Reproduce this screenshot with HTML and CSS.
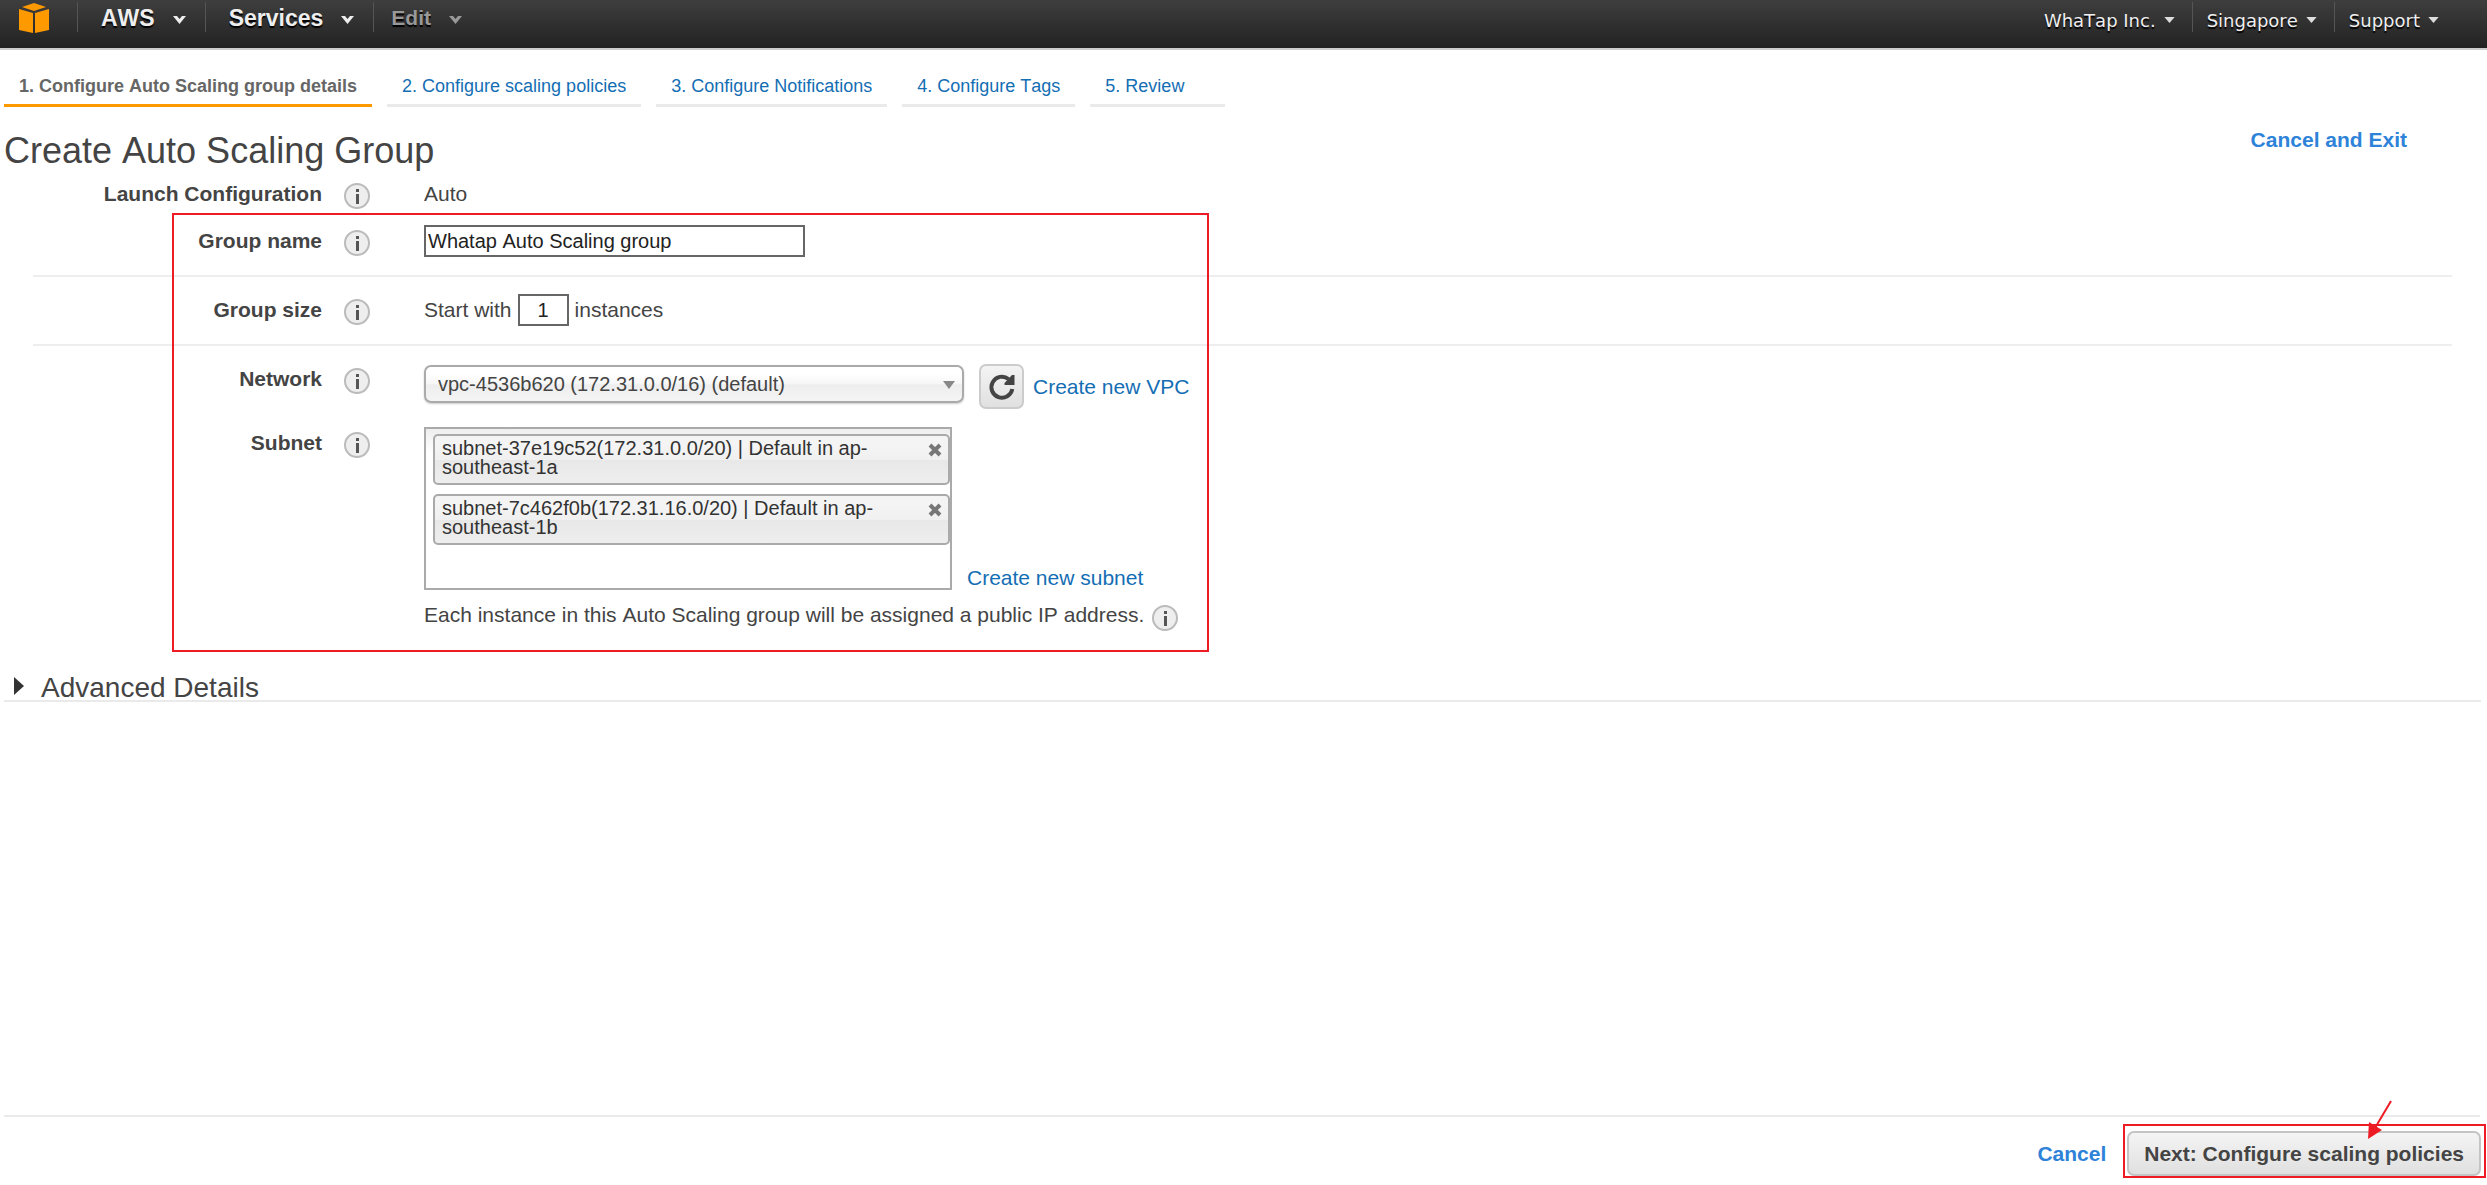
FILE: index.html
```html
<!DOCTYPE html>
<html lang="en">
<head>
    <meta charset="UTF-8">
    <meta name="viewport" content="width=device-width, initial-scale=1.0">
    <title>Create Auto Scaling Group</title>

    <link rel="stylesheet" href="styles.css">

</head>
<body>
    <header class="topbar">
        <a class="logo" href="#" aria-label="Home">
            <svg viewBox="0 0 32 32" width="32" height="32">
                <path fill="#ff9900" d="M4 5 L16 1 L28 5 L16 9 Z"/>
                <path fill="#ff9900" d="M1 7 L15 11 V31 L1 28 Z"/>
                <path fill="#ff9900" d="M31 7 L17 11 V31 L31 28 Z"/>
            </svg>
        </a>
        <button class="menu" type="button">AWS <svg class="caret" viewBox="0 0 13 8"><path d="M0 0 L4 0 L6.500 3 L9 0 L13 0 L6.500 8 Z"/></svg></button>
        <button class="menu" type="button">Services <svg class="caret" viewBox="0 0 13 8"><path d="M0 0 L4 0 L6.500 3 L9 0 L13 0 L6.500 8 Z"/></svg></button>
        <button class="menu menu-edit" type="button">Edit <svg class="caret" viewBox="0 0 13 8"><path d="M0 0 L4 0 L6.500 3 L9 0 L13 0 L6.500 8 Z"/></svg></button>

        <div class="account">
            <button class="submenu" type="button">WhaTap Inc. <svg class="caret-small" viewBox="0 0 12 7"><path d="M0 0 L12 0 L6 7 Z"/></svg></button>
            <button class="submenu" type="button">Singapore <svg class="caret-small" viewBox="0 0 12 7"><path d="M0 0 L12 0 L6 7 Z"/></svg></button>
            <button class="submenu" type="button">Support <svg class="caret-small" viewBox="0 0 12 7"><path d="M0 0 L12 0 L6 7 Z"/></svg></button>
        </div>
    </header>

    <nav class="steps">
        <a class="step active" href="#">1. Configure Auto Scaling group details</a>
        <a class="step" href="#">2. Configure scaling policies</a>
        <a class="step" href="#">3. Configure Notifications</a>
        <a class="step" href="#">4. Configure Tags</a>
        <a class="step" href="#">5. Review</a>
    </nav>

    <main>
        <div class="heading">
            <h1>Create Auto Scaling Group</h1>
            <a class="action" href="#">Cancel and Exit</a>
        </div>

        <form class="form">
            <div class="row">
                <span class="label">Launch Configuration</span>
                <svg class="info" viewBox="0 0 26 26"><use href="#info"/></svg>
                <div class="value">Auto</div>
            </div>
            <div class="row row-line">
                <label class="label" for="name">Group name</label>
                <svg class="info" viewBox="0 0 26 26"><use href="#info"/></svg>
                <div class="value"><input class="text" id="name" type="text" value="Whatap Auto Scaling group"></div>
            </div>
            <div class="row row-line">
                <label class="label" for="size">Group size</label>
                <svg class="info" viewBox="0 0 26 26"><use href="#info"/></svg>
                <div class="value">Start with <input class="text text-size" id="size" type="text" value="1"> instances</div>
            </div>
            <div class="row">
                <label class="label" for="network">Network</label>
                <svg class="info" viewBox="0 0 26 26"><use href="#info"/></svg>
                <div class="value network">
                    <div class="select">
                        <select id="network">
                            <option>vpc-4536b620 (172.31.0.0/16) (default)</option>
                        </select>
                        <svg class="arrow" viewBox="0 0 12 8"><path d="M0 0 L12 0 L6 8 Z"/></svg>
                    </div>
                    <button class="refresh" type="button" aria-label="Refresh">
                        <svg viewBox="0 0 28 28" width="28" height="28">
                            <path fill="none" stroke="#444" stroke-width="4" d="M20.500 6 A10.500 10.500 0 1 0 24.300 16"/>
                            <path fill="#444" d="M26.500 2 V12 H16.500 V10 L24 2 Z"/>
                        </svg>
                    </button>
                    <a href="#">Create new VPC</a>
                </div>
            </div>
            <div class="row">
                <span class="label">Subnet</span>
                <svg class="info" viewBox="0 0 26 26"><use href="#info"/></svg>
                <div>
                    <div class="subnet">
                        <ul class="chips">
                            <li class="chip">
                                <span>subnet-37e19c52(172.31.0.0/20) | Default in ap-southeast-1a</span>
                                <button class="remove" type="button" aria-label="Remove"><svg viewBox="0 0 14 14"><path d="M2 2 L12 12 M12 2 L2 12"/></svg></button>
                            </li>
                            <li class="chip">
                                <span>subnet-7c462f0b(172.31.16.0/20) | Default in ap-southeast-1b</span>
                                <button class="remove" type="button" aria-label="Remove"><svg viewBox="0 0 14 14"><path d="M2 2 L12 12 M12 2 L2 12"/></svg></button>
                            </li>
                        </ul>
                        <a href="#">Create new subnet</a>
                    </div>
                    <div class="value note">
                        Each instance in this Auto Scaling group will be assigned a public IP address.
                        <svg class="info" viewBox="0 0 26 26"><use href="#info"/></svg>
                    </div>
                </div>
            </div>
            <div class="highlight"></div>
        </form>

        <details class="advanced">
            <summary>
                <svg viewBox="0 0 10 18" width="10" height="18"><path fill="#333" d="M0 0 L10 9 L0 18 Z"/></svg>
                Advanced Details
            </summary>
        </details>
    </main>

    <footer class="footer">
        <a class="action" href="#">Cancel</a>
        <div class="next-box">
            <button class="next" type="button">Next: Configure scaling policies</button>
            <svg class="pointer" viewBox="0 0 26 40">
                <path stroke="#ed1c24" stroke-width="2" d="M24 1 L8 28"/>
                <path fill="#ed1c24" d="M1 39 L2 22 L15 30 Z"/>
            </svg>
        </div>
    </footer>

    <svg class="defs">
        <symbol id="info" viewBox="0 0 26 26">
            <circle cx="13" cy="13" r="12" fill="#eee" stroke="#bbb" stroke-width="2"/>
            <rect x="12" y="6" width="3" height="3" fill="#555"/>
            <rect x="12" y="11" width="3" height="10" fill="#555"/>
        </symbol>
    </svg>
</body>
</html>
```
FILE: styles.css
```css
* {
    box-sizing: border-box;
}

body {
    margin: 0;
    min-height: 100vh;
    display: flex;
    flex-direction: column;
    background: #fff;
    color: #444;
    font-family: "Liberation Sans", Arial, sans-serif;
    font-size: 21px;
    font-kerning: none;
}

a {
    color: #146eb4;
    text-decoration: none;
}

button, input, select {
    font: inherit;
    font-kerning: none;
    color: inherit;
}

.defs {
    display: none;
}

/* top bar */
.topbar {
    display: flex;
    align-items: flex-start;
    height: 50px;
    padding-top: 2px;
    border-bottom: 2px solid #ccc;
    background: linear-gradient(#3e3e3e, #222);
}

.logo {
    width: 77px;
    padding-left: 18px;
}

.menu, .submenu {
    display: flex;
    align-items: center;
    height: 30px;
    border: 0;
    border-left: 1px solid #555;
    background: none;
    color: #eee;
    text-shadow: 0 2px 1px #000;
}

.menu {
    gap: 18px;
    padding: 2px 19px 0 23px;
    font-size: 23px;
    font-weight: bold;
}

.menu-edit {
    padding-left: 17px;
    color: #999;
    font-size: 21px;
}

.caret {
    width: 13px;
    height: 8px;
    margin-top: 4px;
    fill: currentColor;
}

.account {
    display: flex;
    margin-left: auto;
    padding-right: 31px;
}

.submenu {
    gap: 8px;
    padding: 6px 17px 0 14px;
    font-family: "DejaVu Sans", Verdana, sans-serif;
    font-size: 18px;
}

.submenu:first-child {
    border-left: 0;
}

.caret-small {
    width: 11px;
    height: 6px;
    fill: #ddd;
}

/* wizard steps */
.steps {
    display: flex;
    gap: 15px;
    padding: 23px 4px 0;
}

.step {
    padding: 0 15px 4px;
    border-bottom: 3px solid #eaeaea;
    font-size: 18px;
    line-height: 27px;
}

.step:last-child {
    min-width: 135px;
}

.step.active {
    border-color: #f90;
    color: #666;
    font-weight: bold;
}

main {
    flex: 1;
}

.heading {
    display: flex;
    justify-content: space-between;
    padding: 21px 80px 0 4px;
}

h1 {
    margin: 0;
    font-size: 36px;
    font-weight: normal;
    line-height: 46px;
}

.action {
    color: #2e83d9;
    font-weight: bold;
    line-height: 24px;
}

/* form */
.form {
    position: relative;
    padding: 4px 0 3px;
}

.row {
    display: grid;
    grid-template-columns: 289px 58px 1fr;
    column-gap: 22px;
    align-items: start;
    margin: 0 35px 0 33px;
    padding-bottom: 18px;
}

.row:first-child {
    padding-bottom: 15px;
}

.row-line {
    margin-bottom: 17px;
    border-bottom: 2px solid #eee;
}

.label {
    font-weight: bold;
    line-height: 32px;
    text-align: right;
}

.info {
    width: 26px;
    height: 26px;
    margin-top: 5px;
}

.value {
    display: flex;
    align-items: center;
    gap: 6px;
    line-height: 32px;
}

.text {
    width: 381px;
    height: 32px;
    padding: 0 2px;
    border: 2px solid #666;
    background: #fff;
    color: #222;
    font-size: 20px;
}

.text-size {
    width: 51px;
    text-align: center;
}

.network {
    align-items: flex-start;
    gap: 0;
}

.network a {
    margin-left: 9px;
    padding-top: 3px;
    line-height: 42px;
}

.select {
    position: relative;
    margin-right: 15px;
}

select {
    display: block;
    width: 540px;
    height: 38px;
    margin-top: 2px;
    padding: 0 40px 0 12px;
    appearance: none;
    border: 2px solid #aaa;
    border-radius: 7px;
    background: linear-gradient(#fff 20%, #f6f6f6 50%, #eee 52%, #f4f4f4);
    box-shadow: 0 1px 2px #ccc;
    font-size: 20px;
}

.arrow {
    position: absolute;
    top: 18px;
    right: 9px;
    width: 12px;
    height: 8px;
    fill: #888;
}

.refresh {
    display: flex;
    align-items: center;
    justify-content: center;
    width: 45px;
    height: 45px;
    margin-top: 1px;
    padding: 0;
    border: 2px solid #ccc;
    border-radius: 7px;
    background: linear-gradient(#f4f4f4, #e0e0e0);
}

.subnet {
    display: flex;
    align-items: flex-end;
    gap: 15px;
}

.chips {
    width: 528px;
    min-height: 163px;
    margin: 0;
    padding: 5px 0 0 7px;
    border: 2px solid #aaa;
    background: linear-gradient(#eee, #fff 15%);
    list-style: none;
}

.chip {
    display: flex;
    justify-content: space-between;
    height: 51px;
    margin-bottom: 9px;
    padding: 3px 6px 3px 7px;
    border: 2px solid #aaa;
    border-radius: 5px;
    background: linear-gradient(#f4f4f4 20%, #f0f0f0 50%, #e8e8e8 52%, #eee);
    color: #333;
    font-size: 20px;
    line-height: 19px;
}

.remove {
    flex: none;
    height: 14px;
    margin-top: 4px;
    padding: 0;
    border: 0;
    background: none;
}

.remove svg {
    display: block;
    width: 14px;
    height: 14px;
    stroke: #777;
    stroke-width: 4;
}

.note {
    gap: 8px;
    margin-top: 9px;
}

.highlight {
    position: absolute;
    top: 39px;
    left: 172px;
    bottom: 0;
    width: 1037px;
    border: 2px solid #ed1c24;
    pointer-events: none;
}

/* advanced */
.advanced {
    margin: 24px 6px 0 4px;
    border-bottom: 2px solid #eaeaea;
}

summary {
    display: flex;
    align-items: center;
    gap: 17px;
    padding-left: 10px;
    font-size: 28px;
    line-height: 24px;
    list-style: none;
}

summary svg {
    margin-bottom: 4px;
}

/* footer */
.footer {
    display: flex;
    align-items: center;
    justify-content: flex-end;
    gap: 17px;
    margin-left: 4px;
    padding: 9px 1px 7px 0;
    background: linear-gradient(#eaeaea, #eaeaea) no-repeat 0 0 / calc(100% - 7px) 2px;
}

.footer .action {
    padding-top: 5px;
}

.next-box {
    position: relative;
    padding: 5px 3px 0 2px;
    border: 2px solid #ed1c24;
}

.next {
    display: block;
    height: 45px;
    padding: 0 15px;
    border: 2px solid #c4c4c4;
    border-radius: 7px;
    background: linear-gradient(#f4f4f4, #e0e0e0);
    font-weight: bold;
}

.pointer {
    position: absolute;
    top: -26px;
    right: 91px;
    width: 26px;
    height: 40px;
}
```
